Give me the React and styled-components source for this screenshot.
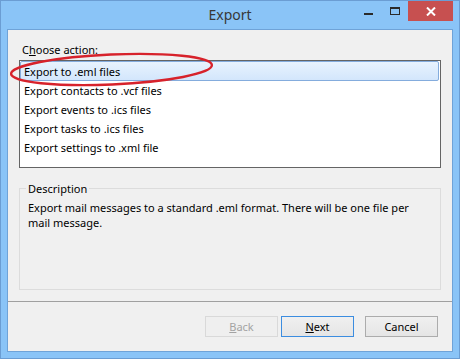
import React from "react";
import styled, { createGlobalStyle } from "styled-components";

const GlobalStyle = createGlobalStyle`
  html, body {
    margin: 0;
    padding: 0;
    background: #ffffff;
  }
  body {
    font-family: "Noto Sans", "Open Sans", sans-serif;
    font-size: 11px;
    color: #000;
  }
  * {
    box-sizing: border-box;
  }
`;

const actions = [
  "Export to .eml files",
  "Export contacts to .vcf files",
  "Export events to .ics files",
  "Export tasks to .ics files",
  "Export settings to .xml file",
];

export default function App() {
  return (
    <>
      <GlobalStyle />
      <Window>
        <TitleBar>
          <span />
          <Title>Export</Title>
          <Captions>
            <CaptionButton>
              <MinIcon />
            </CaptionButton>
            <CaptionButton>
              <MaxIcon />
            </CaptionButton>
            <CloseButton>
              <svg width="10" height="9" viewBox="0 0 10 9">
                <path
                  d="M1 0.5 L9 8.5 M9 0.5 L1 8.5"
                  stroke="#fff"
                  strokeWidth="2"
                  fill="none"
                />
              </svg>
            </CloseButton>
          </Captions>
        </TitleBar>

        <Client>
          <Main>
            {/* action list */}
            <Label>
              C<u>h</u>oose action:
            </Label>
            <ListBox>
              {actions.map((action, index) => (
                <ListItem key={index} selected={index === 0}>
                  {action}
                </ListItem>
              ))}
            </ListBox>
            {/* end of action list */}

            {/* description */}
            <GroupBox>
              <legend>Description</legend>
              <Description>
                Export mail messages to a standard .eml format. There will be
                one file per mail message.
              </Description>
            </GroupBox>
            {/* end of description */}
          </Main>

          <Footer>
            <Button disabled>
              <u>B</u>ack
            </Button>
            <Button primary>
              <u>N</u>ext
            </Button>
            <Button className="cancel">Cancel</Button>
          </Footer>
        </Client>

        {/* red annotation round the first item */}
        <Annotation width="460" height="359" viewBox="0 0 460 359">
          <ellipse
            cx="111.5"
            cy="69.5"
            rx="100.5"
            ry="15"
            transform="rotate(-2.5 111.5 69.5)"
            fill="none"
            stroke="#d7222b"
            strokeWidth="2.4"
          />
        </Annotation>
      </Window>
    </>
  );
}

const Window = styled.div`
  position: relative;
  width: 460px;
  height: 359px;
  border: 1px solid #6b9dd3;
  background: #8ac4f7;
  display: flex;
  flex-direction: column;
`;

const TitleBar = styled.div`
  height: 28px;
  display: grid;
  grid-template-columns: 1fr auto 1fr;
  align-items: start;
`;

const Title = styled.div`
  line-height: 28px;
  font-size: 14px;
  color: #383838;
`;

const Captions = styled.div`
  display: flex;
  justify-content: flex-end;
  margin-right: 6px;
`;

const CaptionButton = styled.div`
  width: 26px;
  height: 20px;
  display: flex;
  align-items: center;
  justify-content: center;
`;

const MinIcon = styled.div`
  width: 9px;
  height: 2px;
  margin-top: 6px;
  margin-right: 1px;
  background: #2a2a2a;
`;

const MaxIcon = styled.div`
  width: 10px;
  height: 8px;
  border: 1px solid #2a2a2a;
  border-top-width: 2px;
`;

const CloseButton = styled.div`
  width: 45px;
  height: 20px;
  background: #c75050;
  display: flex;
  align-items: center;
  justify-content: center;
`;

const Client = styled.div`
  flex: 1;
  margin: 0 6px 6px;
  border: 1px solid #6fa3d8;
  background: #f0f0f0;
  display: flex;
  flex-direction: column;
`;

const Main = styled.div`
  flex: 1;
  display: flex;
  flex-direction: column;
  padding: 12px 11px 11px;
`;

const Label = styled.div`
  line-height: 15px;
  padding-left: 3px;
  margin-bottom: 3px;
  u {
    text-decoration-thickness: 1px;
  }
`;

const ListBox = styled.div`
  height: 108px;
  border: 1px solid #646464;
  background: #fff;
  padding-top: 1px;
`;

const ListItem = styled.div`
  height: ${(p) => (p.selected ? "20px" : "19px")};
  margin: ${(p) => (p.selected ? "-1px 1px 0 0" : "0")};
  padding: 0 3px;
  display: flex;
  align-items: center;
  white-space: nowrap;
  border: 1px solid ${(p) => (p.selected ? "#84acdd" : "transparent")};
  border-radius: 2px;
  background: ${(p) =>
    p.selected ? "linear-gradient(#e8f3fe, #d3e6fc)" : "transparent"};
`;

const GroupBox = styled.fieldset`
  flex: 1;
  margin: 13px 0 0;
  padding: 4px 8px 0 8px;
  border: 1px solid #dcdcdc;
  min-width: 0;
  legend {
    padding: 0 2px;
    margin-left: -2px;
    line-height: 15px;
  }
`;

const Description = styled.div`
  line-height: 15px;
  padding-right: 12px;
`;

const Footer = styled.div`
  border-top: 1px solid #a0a0a0;
  height: 50px;
  padding: 14px 14px 0 0;
  display: flex;
  justify-content: flex-end;
  align-items: flex-start;
  .cancel {
    margin-left: 11px;
  }
`;

const Button = styled.button`
  width: 73px;
  height: 21px;
  margin: 0 0 0 ${(p) => (p.primary ? "3px" : "0")};
  padding: 0;
  font-family: inherit;
  font-size: 11px;
  color: #000;
  border: 1px solid ${(p) => (p.primary ? "#3c8de0" : "#acacac")};
  background: linear-gradient(#f0f0f0, #e5e5e5);
  u {
    text-decoration-thickness: 1px;
  }
  &:disabled {
    color: #a3a3a3;
    border-color: #d9d9d9;
    background: #efefef;
  }
`;

const Annotation = styled.svg`
  position: absolute;
  left: -1px;
  top: -1px;
  pointer-events: none;
`;
